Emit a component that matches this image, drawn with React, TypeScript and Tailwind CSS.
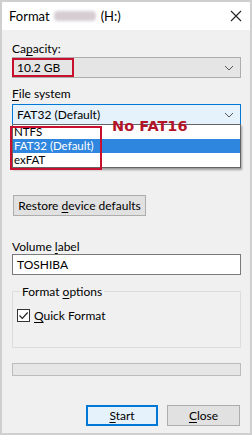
import React from "react";

function Chevron() {
  return (
    <svg width="10" height="6" viewBox="0 0 10 6" className="block">
      <path d="M1 1 L5 5 L9 1" fill="none" stroke="#555" strokeWidth="1" />
    </svg>
  );
}

export default function App() {
  return (
    <div
      className="w-[252px] h-[435px] bg-[#f0f0f0] border-2 border-[#cfcfcf] flex flex-col text-[12px] text-black leading-[15px] overflow-hidden"
      style={{ fontFamily: 'Lato, "Liberation Sans", sans-serif' }}
    >
      {/* Title bar */}
      <div className="h-[28px] bg-white flex items-center justify-between pl-[7px] pr-[6px] shrink-0">
        <div className="flex items-center text-[13px]">
          <span>Format</span>
          <span className="ml-[4px] inline-block w-[42px] h-[10px] bg-[#d6cdd3] blur-[1.5px] rounded-sm" />
          <span className="ml-[5px]">(H:)</span>
        </div>
        <svg width="12" height="12" viewBox="0 0 12 12" className="block mr-[2px]">
          <path d="M1 1 L11 11 M11 1 L1 11" stroke="#222" strokeWidth="1.1" />
        </svg>
      </div>

      {/* Body */}
      <div className="flex flex-col pl-[10px] pr-[9px] pt-[11px]">
        <div className="h-[15px]">
          Ca<span className="underline underline-offset-2">p</span>acity:
        </div>
        <div className="relative mt-[1px] h-[21px] bg-[#e5e5e5] border border-[#adadad] flex items-center justify-between pl-[4px] pr-[6px]">
          <span>10.2 GB</span>
          <Chevron />
          <div className="absolute left-[-1px] top-[0px] w-[62px] h-[19px] border-2 border-[#c8102e]" />
        </div>

        <div className="h-[15px] mt-[8px]">
          <span className="underline underline-offset-2">F</span>ile system
        </div>
        <div className="relative mt-[3px] h-[21px] bg-[#e5f1fb] border border-[#0078d7] flex items-center justify-between pl-[4px] pr-[6px] z-10">
          <span>FAT32 (Default)</span>
          <Chevron />
          {/* Dropdown list */}
          <div className="absolute left-[-1px] right-[-1px] top-[19px] bg-white border border-[#646464] shadow-[1px_2px_2px_rgba(0,0,0,0.35)] flex flex-col text-[11.5px] leading-[14px]">
            <div className="h-[14px] pl-[1px]">NTFS</div>
            <div className="h-[14px] pl-[1px] bg-[#2f86de] text-white">FAT32 (Default)</div>
            <div className="h-[14px] pl-[1px]">exFAT</div>
          </div>
          <div className="absolute left-[-3px] top-[21px] w-[92px] h-[44px] border-2 border-[#c8102e]" />
          <div
            className="absolute left-[99px] top-[13px] text-[14.5px] font-bold text-[#b3142a] leading-[17px]"
            style={{ fontFamily: '"DejaVu Sans", "Liberation Sans", sans-serif' }}
          >
            No FAT16
          </div>
        </div>

        <div className="mt-[70px] w-[133px] h-[21px] ml-[1px] bg-[#e1e1e1] border border-[#adadad] flex items-center justify-center">
          <span>
            Restore <span className="underline underline-offset-2">d</span>evice defaults
          </span>
        </div>

        <div className="h-[15px] mt-[23px]">
          Volume <span className="underline underline-offset-2">l</span>abel
        </div>
        <div className="h-[21px] bg-white border border-[#7a7a7a] flex items-center pl-[4px]">
          TOSHIBA
        </div>

        {/* Format options group */}
        <div className="relative mt-[16px] h-[57px] border border-[#dcdcdc] rounded-[1px]">
          <div className="absolute left-[7px] top-[-8px] bg-[#f0f0f0] px-[2px] h-[15px]">
            Format <span className="underline underline-offset-2">o</span>ptions
          </div>
          <div className="flex items-center mt-[16px] ml-[4px] gap-[4px]">
            <div className="w-[13px] h-[13px] border border-[#333] bg-white flex items-center justify-center">
              <svg width="11" height="11" viewBox="0 0 11 11" className="block">
                <path d="M1.5 5.5 L4.3 8.3 L9.7 2.5" fill="none" stroke="#222" strokeWidth="1.2" />
              </svg>
            </div>
            <span>
              <span className="underline underline-offset-2">Q</span>uick Format
            </span>
          </div>
        </div>

        {/* Progress */}
        <div className="mt-[15px] h-[13px] bg-[#e6e6e6] border border-[#bcbcbc]" />

        {/* Buttons */}
        <div className="mt-[29px] flex justify-end gap-[9px] pr-[1px]">
          <div className="w-[72px] h-[21px] bg-[#e5f1fb] border-2 border-[#0078d7] flex items-center justify-center">
            <span>
              <span className="underline underline-offset-2">S</span>tart
            </span>
          </div>
          <div className="w-[73px] h-[21px] bg-[#e1e1e1] border border-[#adadad] flex items-center justify-center">
            <span>
              <span className="underline underline-offset-2">C</span>lose
            </span>
          </div>
        </div>
      </div>
    </div>
  );
}
